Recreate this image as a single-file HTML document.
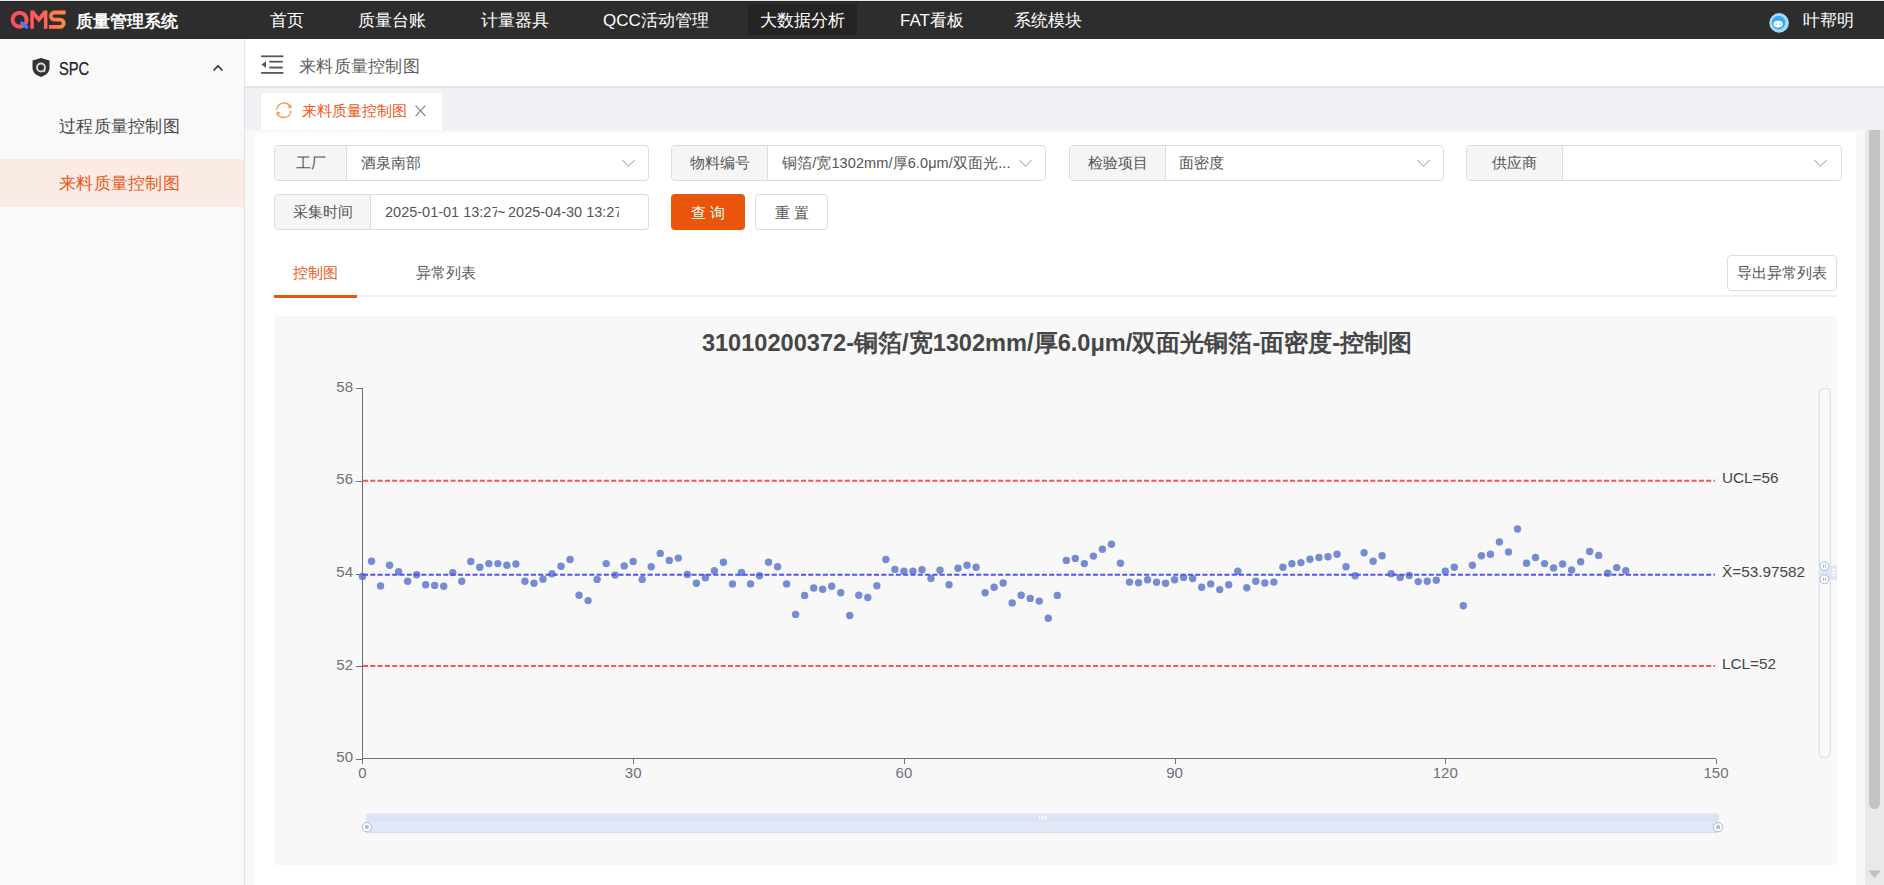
<!DOCTYPE html>
<html><head><meta charset="utf-8">
<style>
*{box-sizing:border-box;margin:0;padding:0}
html,body{width:1884px;height:885px;overflow:hidden;background:#fff;font-family:"Liberation Sans",sans-serif;color:#333}
.a{position:absolute;white-space:nowrap}
#hdr{position:absolute;left:0;top:0;width:1884px;height:39px;background:#2d2d2d;border-top:1px solid #e8e8e8}
.nav{position:absolute;top:0;height:39px;line-height:39px;font-size:17px;color:#fff}
#side{position:absolute;left:0;top:39px;width:245px;height:846px;background:#f9f9f9;border-right:1px solid #e3e3e3}
.grp{position:absolute;height:36px;border:1px solid #dcdcdc;border-radius:4px;background:#fff}
.grp .lb{position:absolute;left:0;top:0;bottom:0;background:#f5f5f5;border-right:1px solid #dcdcdc;border-radius:3px 0 0 3px;font-size:14.5px;color:#555;text-align:center;line-height:34px}
.grp .vl{position:absolute;top:0;white-space:nowrap;line-height:35px;font-size:14.5px;color:#555}
.chev{position:absolute;top:10px;width:9px;height:9px;border-right:1.2px solid #aaa;border-bottom:1.2px solid #aaa;transform:rotate(45deg)}
</style></head><body>

<div id="hdr">
  <div class="a" style="left:0;top:0;width:1884px;height:1px;background:#262626"></div>
  <svg class="a" style="left:0;top:-1px" width="70" height="39" viewBox="0 0 70 39">
    <defs><linearGradient id="lg" gradientUnits="userSpaceOnUse" x1="10" x2="66" y1="0" y2="0"><stop offset="0" stop-color="#ff4c60"/><stop offset="0.5" stop-color="#ff5a5a"/><stop offset="1" stop-color="#ff8c40"/></linearGradient></defs>
    <circle cx="19.6" cy="19.7" r="7" fill="none" stroke="url(#lg)" stroke-width="4"/>
    <path d="M30.3 28.8 V10.6 H34 L38.8 16.8 L43.7 10.6 H47.4 V28.8 H43.9 V16.6 L38.8 22.6 L33.8 16.6 V28.8 Z" fill="url(#lg)"/>
    <path d="M65.6 12.55 H54.4 A3.55 3.55 0 0 0 54.4 19.65 H60.05 A3.6 3.6 0 0 1 60.05 26.85 H48.9" fill="none" stroke="url(#lg)" stroke-width="3.9"/>
    <path d="M21.8 23.2 L26.6 27" stroke="#3d7ef5" stroke-width="3.6" stroke-linecap="round"/>
  </svg>
  <div class="nav" style="left:76px;top:1px;font-weight:bold;font-size:16.6px">质量管理系统</div>
  <div class="a" style="left:748px;top:3px;width:109px;height:31px;background:#242424"></div>
  <div class="nav" style="left:270px">首页</div>
  <div class="nav" style="left:358px">质量台账</div>
  <div class="nav" style="left:481px">计量器具</div>
  <div class="nav" style="left:603px">QCC活动管理</div>
  <div class="nav" style="left:760px">大数据分析</div>
  <div class="nav" style="left:900px">FAT看板</div>
  <div class="nav" style="left:1014px">系统模块</div>
  <svg class="a" style="left:1768px;top:11px" width="22" height="22" viewBox="0 0 22 22">
    <circle cx="11.1" cy="10.9" r="9.8" fill="#a6daf7"/>
    <circle cx="10.6" cy="10.6" r="6.8" fill="#3aaef4"/>
    <ellipse cx="10.1" cy="12.1" rx="4.6" ry="3.4" fill="#fff"/>
    <circle cx="8.3" cy="12.1" r="0.7" fill="#5a8fd8"/><circle cx="12.2" cy="12.1" r="0.7" fill="#5a8fd8"/>
  </svg>
  <div class="nav" style="left:1803px">叶帮明</div>
</div>

<div id="side">
  <svg class="a" style="left:31px;top:18px" width="20" height="21" viewBox="0 0 20 21">
    <path d="M10 1 L18.5 3.5 V11 C18.5 15.5 14.5 18.5 10 20 C5.5 18.5 1.5 15.5 1.5 11 V3.5 Z" fill="#333"/>
    <circle cx="10" cy="10.5" r="4" fill="none" stroke="#ddd" stroke-width="1.8"/>
    <path d="M12.5 13 L14 14.5" stroke="#ddd" stroke-width="1.8"/>
  </svg>
  <div class="a" style="left:59px;top:19px;font-size:17.5px;line-height:22px;color:#1e1e1e;-webkit-text-stroke:0.25px #1e1e1e;transform:scaleX(0.84);transform-origin:0 0">SPC</div>
  <svg class="a" style="left:212px;top:25px" width="12" height="8" viewBox="0 0 12 8"><path d="M1.5 6.5 L6 2 L10.5 6.5" stroke="#333" stroke-width="1.6" fill="none"/></svg>
  <div class="a" style="left:59px;top:76px;letter-spacing:0.3px;font-size:17.4px;line-height:22px;color:#4a4a4a">过程质量控制图</div>
  <div class="a" style="left:0;top:120px;width:244px;height:48px;background:#faebe4"></div>
  <div class="a" style="left:59px;top:133px;letter-spacing:0.3px;font-size:17.4px;line-height:22px;color:#ea5a1a">来料质量控制图</div>
</div>

<!-- breadcrumb -->
<div class="a" style="left:245px;top:39px;width:1639px;height:49px;background:#fff;border-bottom:2px solid #e3e4e7"></div>
<svg class="a" style="left:261px;top:55px" width="23" height="20" viewBox="0 0 23 20">
  <g fill="#585858"><rect x="0.1" y="0.4" width="22.3" height="1.8"/><rect x="8.3" y="5.8" width="13.5" height="1.8"/><rect x="8.3" y="11.6" width="13.5" height="1.9"/><rect x="0.1" y="17" width="22.3" height="1.8"/><path d="M0.5 9.6 L5 6.2 V12.9 Z"/></g>
</svg>
<div class="a" style="left:299px;top:56px;letter-spacing:0.3px;font-size:17px;line-height:22px;color:#606060">来料质量控制图</div>

<!-- tabs bar -->
<div class="a" style="left:245px;top:88px;width:1639px;height:42px;background:#f0f1f5"></div>
<div class="a" style="left:261px;top:93px;width:181px;height:37px;background:#fff;border-radius:4px 4px 0 0"></div>
<svg class="a" style="left:275px;top:101px" width="18" height="18" viewBox="0 0 18 18">
  <g fill="none" stroke="#f7945a" stroke-width="1.4"><path d="M15.6 6.2 A7.2 7.2 0 0 0 1.9 8.6"/><path d="M2.3 12.3 A7.2 7.2 0 0 0 16 9.8"/></g>
  <path d="M16.4 3.2 L16.2 7.6 L12.4 6.4 Z M1.5 15 L1.8 10.6 L5.6 11.8 Z" fill="#f7945a"/>
</svg>
<div class="a" style="left:302px;top:101px;font-size:14.5px;line-height:20px;color:#ec5a1c">来料质量控制图</div>
<svg class="a" style="left:415px;top:105px" width="11" height="12" viewBox="0 0 11 12"><path d="M0.6 0.6 L10.4 11 M10.4 0.6 L0.6 11" stroke="#888" stroke-width="1.2"/></svg>

<!-- content -->
<div class="a" style="left:245px;top:130px;width:1620px;height:755px;background:#f8f8f8"></div>
<div class="a" style="left:255px;top:133px;width:1601px;height:752px;background:#fff"></div>

<!-- scrollbar -->
<div class="a" style="left:1865px;top:130px;width:19px;height:755px;background:#e9e9e9"></div>
<div class="a" style="left:1869px;top:130px;width:11px;height:679px;background:#c3c3c3;border-radius:0 0 6px 6px"></div>
<svg class="a" style="left:1868px;top:870px" width="14" height="9" viewBox="0 0 14 9"><path d="M0 0.5 H13 L6.5 8 Z" fill="#c0c0c0"/></svg>

<!-- filters row 1 -->
<div class="grp" style="left:274px;top:145px;width:375px">
  <div class="lb" style="width:72px">工厂</div>
  <div class="vl" style="left:86px">酒泉南部</div>
  <div class="chev" style="left:349px"></div>
</div>
<div class="grp" style="left:671px;top:145px;width:375px">
  <div class="lb" style="width:96px">物料编号</div>
  <div class="vl" style="left:110px;letter-spacing:0.1px">铜箔/宽1302mm/厚6.0μm/双面光...</div>
  <div class="chev" style="left:349px"></div>
</div>
<div class="grp" style="left:1069px;top:145px;width:375px">
  <div class="lb" style="width:96px">检验项目</div>
  <div class="vl" style="left:109px">面密度</div>
  <div class="chev" style="left:349px"></div>
</div>
<div class="grp" style="left:1466px;top:145px;width:376px">
  <div class="lb" style="width:96px">供应商</div>
  <div class="chev" style="left:349px"></div>
</div>

<!-- filters row 2 -->
<div class="grp" style="left:274px;top:194px;width:375px">
  <div class="lb" style="width:96px">采集时间</div>
  <div class="vl" style="left:110px;width:112px;overflow:hidden;color:#555">2025-01-01 13:27:51</div>
  <div class="vl" style="left:222px;color:#555">~</div>
  <div class="vl" style="left:233px;width:111px;overflow:hidden;color:#555">2025-04-30 13:27:51</div>
</div>
<div class="a" style="left:671px;top:194px;width:74px;height:36px;background:#e8550b;border-radius:4px;color:#fff;font-size:14.5px;line-height:38px;text-align:center;letter-spacing:4px;text-indent:4px">查询</div>
<div class="a" style="left:755px;top:194px;width:73px;height:36px;background:#fff;border:1px solid #dcdcdc;border-radius:4px;color:#555;font-size:14.5px;line-height:36px;text-align:center;letter-spacing:4px;text-indent:4px">重置</div>

<!-- chart tabs -->
<div class="a" style="left:274px;top:295px;width:1563px;height:2px;background:#efefef"></div>
<div class="a" style="left:274px;top:295px;width:83px;height:3px;background:#e9550f"></div>
<div class="a" style="left:293px;top:263px;font-size:14.5px;line-height:20px;color:#ec5a1c">控制图</div>
<div class="a" style="left:416px;top:263px;font-size:14.5px;line-height:20px;color:#5a5a5a">异常列表</div>
<div class="a" style="left:1727px;top:255px;width:110px;height:36px;border:1px solid #dcdcdc;border-radius:4px;font-size:14.5px;line-height:34px;text-align:center;color:#555">导出异常列表</div>

<!-- chart -->
<div class="a" style="left:274px;top:316px;width:1563px;height:549px;background:#f8f8f8"></div>
<div class="a" style="left:275.5px;top:328px;width:1563px;text-align:center;font-size:23.6px;line-height:30px;font-weight:bold;color:#464646">31010200372-铜箔/宽1302mm/厚6.0μm/双面光铜箔-面密度-控制图</div>
<svg class="a" style="left:0;top:0" width="1884" height="885" viewBox="0 0 1884 885">
<g stroke="#6E7079" stroke-width="1" fill="none" shape-rendering="crispEdges">
<path d="M362.5 388 V759"/>
<path d="M362 758.5 H1716"/>
<path d="M356 388.5 H362"/>
<path d="M356 481.5 H362"/>
<path d="M356 574.5 H362"/>
<path d="M356 666.5 H362"/>
<path d="M356 759.5 H362"/>
<path d="M362.5 759 V764"/>
<path d="M633.5 759 V764"/>
<path d="M904.5 759 V764"/>
<path d="M1175.5 759 V764"/>
<path d="M1445.5 759 V764"/>
<path d="M1716.5 759 V764"/>
</g>
<g font-family="Liberation Sans, sans-serif" font-size="15" fill="#6E7079">
<text x="353" y="391.8" text-anchor="end">58</text>
<text x="353" y="484.4" text-anchor="end">56</text>
<text x="353" y="577.1" text-anchor="end">54</text>
<text x="353" y="669.8" text-anchor="end">52</text>
<text x="353" y="762.4" text-anchor="end">50</text>
<text x="362.5" y="778" text-anchor="middle">0</text>
<text x="633.2" y="778" text-anchor="middle">30</text>
<text x="903.9" y="778" text-anchor="middle">60</text>
<text x="1174.6" y="778" text-anchor="middle">90</text>
<text x="1445.3" y="778" text-anchor="middle">120</text>
<text x="1716.0" y="778" text-anchor="middle">150</text>
</g>
<g fill="#5470C6" fill-opacity="0.8"><circle cx="362.50" cy="576.40" r="3.7"/><circle cx="371.52" cy="561.30" r="3.7"/><circle cx="380.55" cy="585.90" r="3.7"/><circle cx="389.57" cy="565.30" r="3.7"/><circle cx="398.59" cy="571.70" r="3.7"/><circle cx="407.62" cy="581.20" r="3.7"/><circle cx="416.64" cy="574.70" r="3.7"/><circle cx="425.66" cy="584.80" r="3.7"/><circle cx="434.69" cy="585.40" r="3.7"/><circle cx="443.71" cy="586.30" r="3.7"/><circle cx="452.73" cy="572.60" r="3.7"/><circle cx="461.76" cy="581.20" r="3.7"/><circle cx="470.78" cy="561.50" r="3.7"/><circle cx="479.80" cy="567.20" r="3.7"/><circle cx="488.83" cy="563.60" r="3.7"/><circle cx="497.85" cy="563.60" r="3.7"/><circle cx="506.87" cy="565.30" r="3.7"/><circle cx="515.90" cy="564.00" r="3.7"/><circle cx="524.92" cy="581.20" r="3.7"/><circle cx="533.94" cy="583.20" r="3.7"/><circle cx="542.97" cy="579.20" r="3.7"/><circle cx="551.99" cy="573.70" r="3.7"/><circle cx="561.01" cy="566.30" r="3.7"/><circle cx="570.04" cy="559.50" r="3.7"/><circle cx="579.06" cy="595.20" r="3.7"/><circle cx="588.08" cy="600.60" r="3.7"/><circle cx="597.11" cy="579.40" r="3.7"/><circle cx="606.13" cy="563.60" r="3.7"/><circle cx="615.15" cy="575.10" r="3.7"/><circle cx="624.18" cy="565.90" r="3.7"/><circle cx="633.20" cy="561.50" r="3.7"/><circle cx="642.22" cy="579.40" r="3.7"/><circle cx="651.25" cy="566.70" r="3.7"/><circle cx="660.27" cy="553.40" r="3.7"/><circle cx="669.29" cy="560.40" r="3.7"/><circle cx="678.32" cy="558.10" r="3.7"/><circle cx="687.34" cy="574.40" r="3.7"/><circle cx="696.36" cy="583.20" r="3.7"/><circle cx="705.39" cy="577.80" r="3.7"/><circle cx="714.41" cy="570.70" r="3.7"/><circle cx="723.43" cy="562.20" r="3.7"/><circle cx="732.46" cy="583.90" r="3.7"/><circle cx="741.48" cy="572.40" r="3.7"/><circle cx="750.50" cy="583.90" r="3.7"/><circle cx="759.53" cy="575.80" r="3.7"/><circle cx="768.55" cy="562.20" r="3.7"/><circle cx="777.57" cy="566.70" r="3.7"/><circle cx="786.60" cy="583.90" r="3.7"/><circle cx="795.62" cy="614.40" r="3.7"/><circle cx="804.64" cy="595.40" r="3.7"/><circle cx="813.67" cy="588.00" r="3.7"/><circle cx="822.69" cy="589.30" r="3.7"/><circle cx="831.71" cy="586.20" r="3.7"/><circle cx="840.74" cy="592.70" r="3.7"/><circle cx="849.76" cy="615.50" r="3.7"/><circle cx="858.78" cy="595.20" r="3.7"/><circle cx="867.81" cy="597.50" r="3.7"/><circle cx="876.83" cy="585.70" r="3.7"/><circle cx="885.85" cy="559.50" r="3.7"/><circle cx="894.88" cy="569.40" r="3.7"/><circle cx="903.90" cy="571.30" r="3.7"/><circle cx="912.92" cy="571.30" r="3.7"/><circle cx="921.95" cy="569.70" r="3.7"/><circle cx="930.97" cy="578.50" r="3.7"/><circle cx="939.99" cy="570.30" r="3.7"/><circle cx="949.02" cy="584.80" r="3.7"/><circle cx="958.04" cy="568.30" r="3.7"/><circle cx="967.06" cy="565.30" r="3.7"/><circle cx="976.09" cy="567.20" r="3.7"/><circle cx="985.11" cy="592.70" r="3.7"/><circle cx="994.13" cy="587.30" r="3.7"/><circle cx="1003.16" cy="583.00" r="3.7"/><circle cx="1012.18" cy="602.90" r="3.7"/><circle cx="1021.20" cy="595.20" r="3.7"/><circle cx="1030.23" cy="598.40" r="3.7"/><circle cx="1039.25" cy="601.10" r="3.7"/><circle cx="1048.27" cy="618.20" r="3.7"/><circle cx="1057.30" cy="595.40" r="3.7"/><circle cx="1066.32" cy="560.40" r="3.7"/><circle cx="1075.34" cy="558.40" r="3.7"/><circle cx="1084.37" cy="563.60" r="3.7"/><circle cx="1093.39" cy="556.10" r="3.7"/><circle cx="1102.41" cy="549.30" r="3.7"/><circle cx="1111.44" cy="544.20" r="3.7"/><circle cx="1120.46" cy="563.20" r="3.7"/><circle cx="1129.48" cy="582.10" r="3.7"/><circle cx="1138.51" cy="582.80" r="3.7"/><circle cx="1147.53" cy="579.80" r="3.7"/><circle cx="1156.55" cy="582.30" r="3.7"/><circle cx="1165.58" cy="583.20" r="3.7"/><circle cx="1174.60" cy="579.80" r="3.7"/><circle cx="1183.62" cy="577.40" r="3.7"/><circle cx="1192.65" cy="578.50" r="3.7"/><circle cx="1201.67" cy="587.30" r="3.7"/><circle cx="1210.69" cy="583.90" r="3.7"/><circle cx="1219.72" cy="589.60" r="3.7"/><circle cx="1228.74" cy="584.80" r="3.7"/><circle cx="1237.76" cy="571.30" r="3.7"/><circle cx="1246.79" cy="587.70" r="3.7"/><circle cx="1255.81" cy="581.20" r="3.7"/><circle cx="1264.83" cy="583.00" r="3.7"/><circle cx="1273.86" cy="582.10" r="3.7"/><circle cx="1282.88" cy="567.20" r="3.7"/><circle cx="1291.90" cy="563.80" r="3.7"/><circle cx="1300.93" cy="562.60" r="3.7"/><circle cx="1309.95" cy="559.20" r="3.7"/><circle cx="1318.97" cy="557.50" r="3.7"/><circle cx="1328.00" cy="556.80" r="3.7"/><circle cx="1337.02" cy="554.20" r="3.7"/><circle cx="1346.04" cy="566.70" r="3.7"/><circle cx="1355.07" cy="575.80" r="3.7"/><circle cx="1364.09" cy="552.80" r="3.7"/><circle cx="1373.11" cy="561.30" r="3.7"/><circle cx="1382.14" cy="555.80" r="3.7"/><circle cx="1391.16" cy="573.70" r="3.7"/><circle cx="1400.18" cy="577.40" r="3.7"/><circle cx="1409.21" cy="575.50" r="3.7"/><circle cx="1418.23" cy="581.60" r="3.7"/><circle cx="1427.25" cy="581.20" r="3.7"/><circle cx="1436.28" cy="580.20" r="3.7"/><circle cx="1445.30" cy="571.30" r="3.7"/><circle cx="1454.32" cy="567.20" r="3.7"/><circle cx="1463.35" cy="605.70" r="3.7"/><circle cx="1472.37" cy="565.30" r="3.7"/><circle cx="1481.39" cy="555.80" r="3.7"/><circle cx="1490.42" cy="554.20" r="3.7"/><circle cx="1499.44" cy="541.90" r="3.7"/><circle cx="1508.46" cy="552.00" r="3.7"/><circle cx="1517.49" cy="529.00" r="3.7"/><circle cx="1526.51" cy="563.20" r="3.7"/><circle cx="1535.53" cy="557.50" r="3.7"/><circle cx="1544.56" cy="563.60" r="3.7"/><circle cx="1553.58" cy="567.90" r="3.7"/><circle cx="1562.60" cy="564.00" r="3.7"/><circle cx="1571.63" cy="569.90" r="3.7"/><circle cx="1580.65" cy="561.80" r="3.7"/><circle cx="1589.67" cy="551.50" r="3.7"/><circle cx="1598.70" cy="555.40" r="3.7"/><circle cx="1607.72" cy="573.30" r="3.7"/><circle cx="1616.74" cy="567.60" r="3.7"/><circle cx="1625.77" cy="570.70" r="3.7"/></g>
<path d="M363 480.8 H1715" stroke="#FF5252" stroke-width="2" stroke-dasharray="5 2.3"/>
<path d="M363 666.1 H1715" stroke="#FF5252" stroke-width="2" stroke-dasharray="5 2.3"/>
<path d="M363 574.7 H1715" stroke="#5050FF" stroke-width="2" stroke-dasharray="5 2.3"/>
<g font-family="Liberation Sans, sans-serif" font-size="15.3" fill="#464646">
<text x="1722" y="483.4">UCL=56</text>
<text x="1722" y="577.3">X&#772;=53.97582</text>
<text x="1722" y="668.8">LCL=52</text>
</g>
<!-- vertical datazoom -->
<rect x="1819.2" y="388.5" width="11" height="369" rx="4" fill="none" stroke="#d8dff0" stroke-width="1.2"/>
<rect x="1819" y="566" width="11" height="13" fill="#dde6f7"/>
<rect x="1830" y="565.5" width="7" height="14.5" fill="#dfe6f5"/>
<rect x="1832" y="569" width="3.5" height="1.3" fill="#fff"/><rect x="1832" y="572" width="3.5" height="1.3" fill="#fff"/><rect x="1832" y="575" width="3.5" height="1.3" fill="#fff"/>
<g fill="#fff" stroke="#a8b6d8" stroke-width="1"><circle cx="1824.4" cy="566.1" r="4.4"/><circle cx="1824.4" cy="579.2" r="4.4"/></g>
<g fill="#a8b5d5"><rect x="1823" y="564.4" width="1.1" height="3.4"/><rect x="1825" y="564.4" width="1.1" height="3.4"/><rect x="1823" y="577.5" width="1.1" height="3.4"/><rect x="1825" y="577.5" width="1.1" height="3.4"/></g>
<!-- horizontal datazoom -->
<rect x="366" y="813.6" width="1353" height="9" rx="2" fill="#dde3f0"/>
<rect x="366" y="822.5" width="1352" height="10.5" fill="#e0e8f7"/>
<rect x="366" y="832" width="1352" height="1" fill="#d2dcf0"/>
<rect x="1039" y="816" width="1.5" height="3.5" fill="#fff"/><rect x="1042" y="816" width="1.5" height="3.5" fill="#fff"/><rect x="1045" y="816" width="1.5" height="3.5" fill="#fff"/>
<g fill="#fff" stroke="#a8b6d8" stroke-width="1"><circle cx="366.9" cy="827.1" r="4.6"/><circle cx="1718.1" cy="827.2" r="4.6"/></g>
<g fill="#a8b5d5"><rect x="365.1" y="825.4" width="3.6" height="3.4"/><rect x="1716.3" y="825.4" width="3.6" height="3.4"/></g>
</svg>

</body></html>
